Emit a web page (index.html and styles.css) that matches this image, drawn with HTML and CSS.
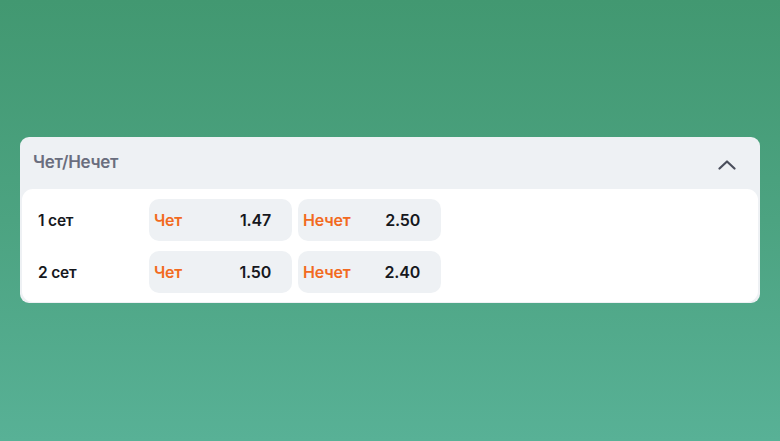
FILE: index.html
```html
<!DOCTYPE html>
<html lang="ru">
<head>
<meta charset="utf-8">
<link rel="stylesheet" href="styles.css">
</head>
<body>
<div class="page">
  <section class="market">
    <header class="market-head">
      <span class="market-title">Чет/Нечет</span>
      <svg class="chevron" width="18" height="10" viewBox="0 0 18 10"><path d="M1.5 8.5 L9 1.5 L16.5 8.5" fill="none" stroke="#4b4f5c" stroke-width="2.2" stroke-linecap="round" stroke-linejoin="round"/></svg>
    </header>
    <div class="market-body">
      <div class="row">
        <span class="row-label">1 сет</span>
        <div class="odd"><span class="odd-name">Чет</span><span class="odd-val">1.47</span></div>
        <div class="odd"><span class="odd-name">Нечет</span><span class="odd-val">2.50</span></div>
      </div>
      <div class="row">
        <span class="row-label">2 сет</span>
        <div class="odd"><span class="odd-name">Чет</span><span class="odd-val">1.50</span></div>
        <div class="odd"><span class="odd-name">Нечет</span><span class="odd-val">2.40</span></div>
      </div>
    </div>
  </section>
</div>
</body>
</html>
```

FILE: styles.css
```css
html, body {
  margin: 0;
  padding: 0;
}
body {
  width: 780px;
  height: 441px;
  overflow: hidden;
  background: linear-gradient(180deg, #429871 0%, #4ca381 50%, #58b196 100%);
  font-family: Inter, "Noto Sans", sans-serif;
}
.page {
  padding: 137px 20px 0 20px;
}
.market {
  background: #eef1f4;
  border-radius: 9px;
  padding: 0 2px 1px 2px;
}
.market-head {
  height: 52px;
  display: flex;
  align-items: center;
  justify-content: space-between;
  padding: 0 22px 0 11px;
}
.market-title {
  font-size: 17px;
  font-weight: 600;
  color: #6a6e7e;
  letter-spacing: -0.3px;
  margin-top: -3px;
}
.chevron {
  margin-top: 3px;
}
.market-body {
  background: #fff;
  border-radius: 11px;
  padding: 10px 16px 9px 16px;
  display: flex;
  flex-direction: column;
  gap: 10px;
}
.row {
  display: flex;
  align-items: center;
  gap: 6px;
}
.row-label {
  width: 105px;
  font-size: 15.5px;
  font-weight: 600;
  color: #16181d;
  letter-spacing: -0.2px;
}
.odd {
  width: 143px;
  height: 42px;
  box-sizing: border-box;
  background: #eef1f4;
  border-radius: 10px;
  display: flex;
  align-items: center;
  padding: 0 21px 0 5px;
  font-size: 16px;
  font-weight: 600;
  letter-spacing: -0.2px;
}
.odd-name {
  flex: 1;
  color: #f26a21;
}
.odd-val {
  color: #16181d;
}
```
